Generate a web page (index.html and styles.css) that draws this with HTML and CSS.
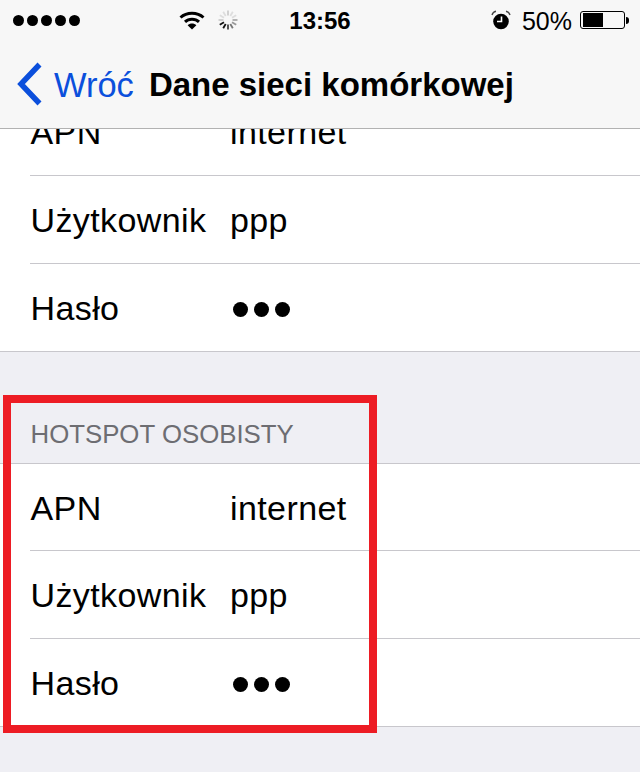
FILE: index.html
```html
<!DOCTYPE html>
<html lang="pl">
<head>
<meta charset="utf-8">
<title>Dane sieci komórkowej</title>
<link rel="stylesheet" href="styles.css">
</head>
<body>
<div class="screen">
  <header class="topbar">
    <div class="status">
      <div class="status-left">
        <div class="signal"><i></i><i></i><i></i><i></i><i></i></div>
        <svg class="wifi" width="26" height="20" viewBox="0 0 26 20"><path d="M1.500 7.500C7.800 1.800 18.200 1.800 24.500 7.500" fill="none" stroke="#000" stroke-width="3"/><path d="M6 11.800C9.800 8.300 16.200 8.300 20 11.800" fill="none" stroke="#000" stroke-width="3"/><path d="M13 19.500L8.600 15.200C11 13 15 13 17.400 15.200Z" fill="#000"/></svg>
        <svg class="spinner" width="20" height="20" viewBox="0 0 20 20"><g stroke-width="1.800" fill="none"><path d="M10 0.500V5.500" stroke="#ccc"/><path d="M14.800 1.800L12.300 6" stroke="#ddd"/><path d="M18.200 5.200L14 7.700" stroke="#ddd"/><path d="M19.500 10H14.500" stroke="#aaa"/><path d="M18.200 14.800L14 12.300" stroke="#999"/><path d="M14.800 18.200L12.300 14" stroke="#777"/><path d="M10 19.500V14.500" stroke="#444"/><path d="M5.200 18.200L7.700 14" stroke="#111"/><path d="M1.800 14.800L6 12.300" stroke="#111"/><path d="M0.500 10H5.500" stroke="#ccc"/><path d="M1.800 5.200L6 7.700" stroke="#ddd"/><path d="M5.200 1.800L7.700 6" stroke="#ddd"/></g></svg>
      </div>
      <div class="clock">13:56</div>
      <div class="status-right">
        <svg class="alarm" width="20" height="20" viewBox="0 0 20 20"><circle cx="10" cy="11.500" r="7.800" fill="#000"/><path d="M10.500 6.500V11.500H6" fill="none" stroke="#fff" stroke-width="1.600"/><path d="M1 5C1.600 2.800 3 1.600 5 1.200" fill="none" stroke="#444" stroke-width="1.400"/><path d="M19 5C18.400 2.800 17 1.600 15 1.200" fill="none" stroke="#444" stroke-width="1.400"/></svg>
        <span class="percent">50%</span>
        <div class="battery"><div class="battery-level"></div></div>
        <div class="battery-tip"></div>
      </div>
    </div>
    <nav class="navbar">
      <svg class="chevron" width="27" height="44" viewBox="0 0 27 44"><path d="M23.500 2.500L5 22L23.500 41.500" fill="none" stroke="#0b4fdc" stroke-width="5.500"/></svg>
      <span class="back">Wróć</span>
      <span class="title">Dane sieci komórkowej</span>
    </nav>
  </header>
  <main class="content">
    <section class="group group-top">
      <div class="row"><span class="label">APN</span><span class="value">internet</span></div>
      <div class="row"><span class="label">Użytkownik</span><span class="value">ppp</span></div>
      <div class="row"><span class="label">Hasło</span><span class="dots"><i></i><i></i><i></i></span></div>
    </section>
    <h2 class="section-head">HOTSPOT OSOBISTY</h2>
    <section class="group group-hotspot">
      <div class="row"><span class="label">APN</span><span class="value">internet</span></div>
      <div class="row"><span class="label">Użytkownik</span><span class="value">ppp</span></div>
      <div class="row"><span class="label">Hasło</span><span class="dots"><i></i><i></i><i></i></span></div>
    </section>
  </main>
  <div class="highlight"></div>
</div>
</body>
</html>
```
FILE: styles.css
```css
* { box-sizing: border-box; }
html, body { margin: 0; padding: 0; }
body { background: #efeff4; font-family: "Liberation Sans", Arial, sans-serif; color: #000; }
.screen { position: relative; width: 640px; height: 772px; overflow: hidden; background: #efeff4; }
.topbar { height: 129px; background: #f7f7f7; border-bottom: 1px solid #b2b2b2; position: relative; z-index: 1; }
.status { height: 40px; display: grid; grid-template-columns: 1fr auto 1fr; align-items: center; padding: 0 11px 0 13px; }
.status-left { display: flex; align-items: center; }
.signal { display: flex; gap: 3px; }
.signal i { width: 11px; height: 11px; border-radius: 50%; background: #000; }
.wifi { margin-left: 99px; }
.spinner { margin-left: 13px; }
.clock { font-size: 24px; font-weight: 700; padding-top: 2px; margin-right: 2px; }
.status-right { display: flex; align-items: center; justify-content: flex-end; }
.alarm { margin-right: 11px; }
.percent { font-size: 25px; margin-right: 8px; padding-top: 2px; }
.battery { width: 45px; height: 18px; border: 1px solid #000; border-radius: 3px; padding: 1px 2px; }
.battery-level { width: 20px; height: 100%; background: #000; }
.battery-tip { width: 3px; height: 7px; background: #000; border-radius: 0 3px 3px 0; margin-left: 1px; }
.navbar { height: 88px; display: flex; align-items: center; padding: 2px 0 0 16px; }
.chevron { flex: none; margin-top: -2px; }
.back { color: #0b4fdc; font-size: 34.5px; margin-left: 11px; }
.title { font-size: 33px; font-weight: 700; margin-left: 15px; }
.content { height: 643px; overflow: hidden; }
.group { background: #fff; border-top: 1px solid #c8c7cc; border-bottom: 1px solid #c8c7cc; }
.group-top { margin-top: -41px; border-top: 0; }
.row { height: 88px; margin-left: 30px; display: flex; align-items: center; padding-top: 2px; border-bottom: 1px solid #c8c7cc; font-size: 34px; letter-spacing: 0.4px; }
.row:last-child { border-bottom: 0; height: 87px; }
.group-hotspot .row:first-child { height: 87px; }
.label { width: 200px; padding-left: 0.5px; }
.value { display: block; }
.dots { display: flex; gap: 6px; padding-left: 3px; margin-top: 1px; }
.dots i { width: 15px; height: 15px; border-radius: 50%; background: #000; }
.section-head { margin: 0; height: 111px; padding: 67px 0 0 30.5px; font-size: 25.8px; line-height: 30px; font-weight: 400; color: #6d6d72; }
.highlight { position: absolute; left: 3px; top: 395px; width: 374px; height: 338px; border: 8px solid #ed1c24; z-index: 2; }
```
